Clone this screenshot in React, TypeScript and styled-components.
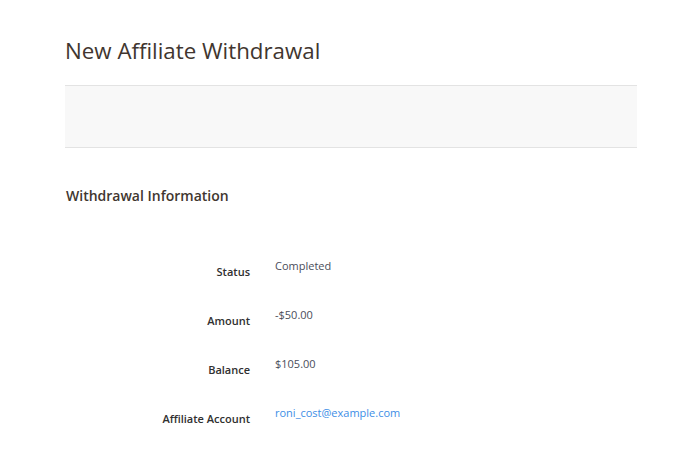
import styled, { createGlobalStyle } from "styled-components";
import { Fragment } from "react";

const Global = createGlobalStyle`
  html, body {
    margin: 0;
    padding: 0;
    background: #fff;
  }
  body {
    font-family: "Open Sans", "Liberation Sans", Arial, sans-serif;
    color: #41362f;
  }
`;

const Page = styled.div`
  padding: 36px 48px 20px 65px;
`;

const Title = styled.h1`
  margin: 0 0 19px 0;
  font-size: 22.3px;
  font-weight: 400;
  line-height: 30px;
  color: #41362f;
`;

const ActionsBar = styled.div`
  height: 61px;
  background: #f8f8f8;
  border-top: 1px solid #e3e3e3;
  border-bottom: 1px solid #e3e3e3;
`;

const SectionTitle = styled.h2`
  margin: 38px 0 0 1px;
  font-size: 14px;
  font-weight: 600;
  line-height: 20px;
  color: #41362f;
`;

const Fields = styled.div`
  display: grid;
  grid-template-columns: 185px 1fr;
  column-gap: 25px;
  row-gap: 22px;
  margin-top: 49px;
`;

const Label = styled.div`
  text-align: right;
  font-size: 11px;
  font-weight: 600;
  line-height: 20px;
  padding-top: 7px;
  color: #303030;
`;

const Value = styled.div<{ $link?: boolean }>`
  font-size: 11px;
  line-height: 20px;
  padding-top: 1px;
  color: ${(p) => (p.$link ? "#3d8ee6" : "#4a4d5a")};
`;

const rows = [
  { label: "Status", value: "Completed" },
  { label: "Amount", value: "-$50.00" },
  { label: "Balance", value: "$105.00" },
  { label: "Affiliate Account", value: "roni_cost@example.com", link: true },
];

export default function App() {
  return (
    <>
      <Global />
      <Page>
        <Title>New Affiliate Withdrawal</Title>
        <ActionsBar />
        <SectionTitle>Withdrawal Information</SectionTitle>
        <Fields>
          {rows.map((r) => (
            <Fragment key={r.label}>
              <Label>{r.label}</Label>
              <Value $link={r.link}>{r.value}</Value>
            </Fragment>
          ))}
        </Fields>
      </Page>
    </>
  );
}
